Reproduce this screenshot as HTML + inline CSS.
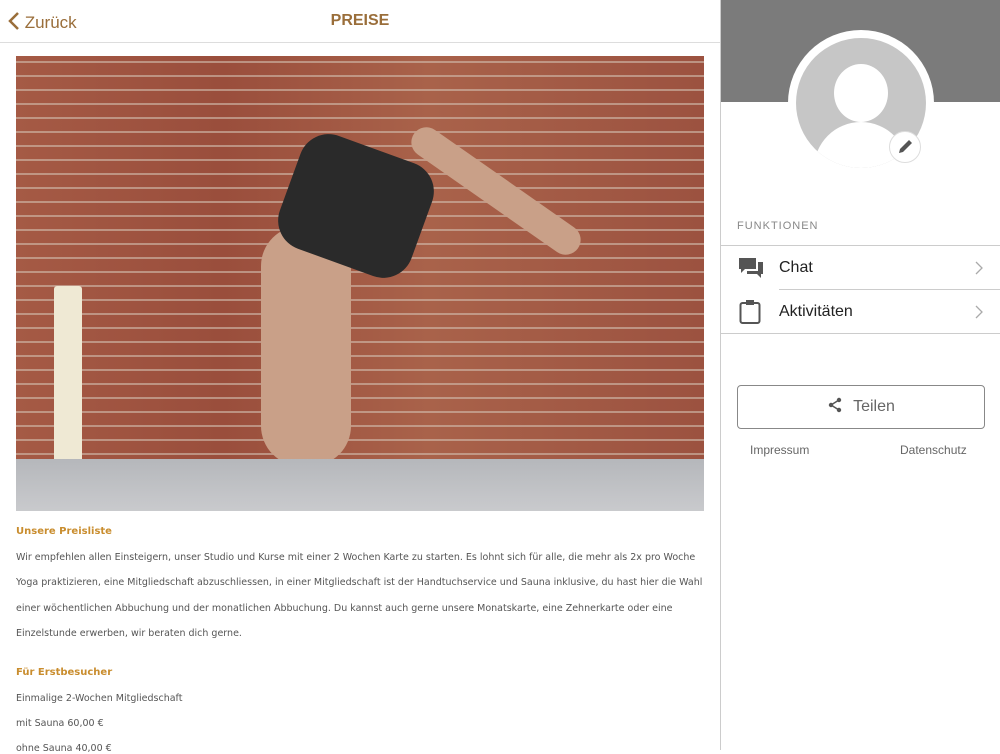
<!DOCTYPE html>
<html><head><meta charset="utf-8"><style>
*{margin:0;padding:0;box-sizing:border-box}
body{width:1000px;height:750px;overflow:hidden;background:#fff;font-family:"Liberation Sans",sans-serif;position:relative}
.hdr{position:absolute;left:0;top:0;width:720px;height:43px;border-bottom:1px solid #ddd}
.back{position:absolute;left:8px;top:12px;color:#9a6e3a;font-size:17px}
.title{position:absolute;left:0;width:720px;top:12px;text-align:center;color:#9a6e3a;font-weight:bold;font-size:16px}
.img{position:absolute;left:16px;top:56px;width:688px;height:455px;overflow:hidden;
background:repeating-linear-gradient(0deg,rgba(210,190,175,.6) 0 2px,transparent 2px 14px),linear-gradient(90deg,#a55a45,#9a4e3c 30%,#a9624a 60%,#9c5240);}
.floor{position:absolute;left:0;bottom:0;width:100%;height:52px;background:linear-gradient(#b5b7bb,#c9cacd)}
.txt{position:absolute;left:16px;font-family:"DejaVu Sans",sans-serif;font-size:9.5px;color:#555;white-space:nowrap}
.h{color:#c98d2e;font-weight:bold;font-size:10px}
.side{position:absolute;left:720px;top:0;width:280px;height:750px;border-left:1px solid #ccc}
.gray{position:absolute;left:0;top:0;width:280px;height:102px;background:#7b7b7b}
.av{position:absolute;left:67px;top:30px;width:146px;height:146px;border-radius:50%;background:#fff}
.av2{position:absolute;left:8px;top:8px;width:130px;height:130px;border-radius:50%;background:#c6c6c6;overflow:hidden}
.pen{position:absolute;left:168px;top:131px;width:32px;height:32px;border-radius:50%;background:#fff;border:1px solid #ddd}
.lbl{position:absolute;left:16px;top:220px;font-size:11px;color:#888;letter-spacing:1px}
.row{position:absolute;left:0;width:280px;height:44px;font-size:16px;color:#222}
</style></head><body>
<div class="hdr"><div class="back"><svg width="12" height="18" viewBox="0 0 12 18" style="vertical-align:-2px"><path d="M10 1L2 9l8 8" stroke="#9a6e3a" stroke-width="2.5" fill="none"/></svg> Zurück</div><div class="title">PREISE</div></div>
<div class="img">
<div style="position:absolute;left:38px;top:230px;width:28px;height:180px;background:#efe9d4;border-radius:3px"></div>
<div style="position:absolute;left:245px;top:170px;width:90px;height:240px;background:#c9a088;border-radius:40px"></div>
<div style="position:absolute;left:270px;top:90px;width:140px;height:120px;background:#2a2a2a;border-radius:30px;transform:rotate(20deg)"></div>
<div style="position:absolute;left:380px;top:120px;width:200px;height:30px;background:#c9a088;border-radius:15px;transform:rotate(35deg)"></div>
<div class="floor"></div></div>
<div class="txt h" style="top:526px">Unsere Preisliste</div>
<div class="txt" style="top:552px">Wir empfehlen allen Einsteigern, unser Studio und Kurse mit einer 2 Wochen Karte zu starten. Es lohnt sich für alle, die mehr als 2x pro Woche</div>
<div class="txt" style="top:577px">Yoga praktizieren, eine Mitgliedschaft abzuschliessen, in einer Mitgliedschaft ist der Handtuchservice und Sauna inklusive, du hast hier die Wahl</div>
<div class="txt" style="top:603px">einer wöchentlichen Abbuchung und der monatlichen Abbuchung. Du kannst auch gerne unsere Monatskarte, eine Zehnerkarte oder eine</div>
<div class="txt" style="top:628px">Einzelstunde erwerben, wir beraten dich gerne.</div>
<div class="txt h" style="top:667px">Für Erstbesucher</div>
<div class="txt" style="top:693px">Einmalige 2-Wochen Mitgliedschaft</div>
<div class="txt" style="top:718px">mit Sauna 60,00 €</div>
<div class="txt" style="top:743px">ohne Sauna 40,00 €</div>
<div class="side">
<div class="gray"></div>
<div class="av"><div class="av2"><div style="position:absolute;left:38px;top:26px;width:54px;height:58px;border-radius:50%;background:#fff"></div><div style="position:absolute;left:18px;top:84px;width:94px;height:80px;border-radius:47px 47px 0 0;background:#fff"></div></div></div>
<div class="pen"><svg width="30" height="30" viewBox="0 0 30 30"><path d="M9 21l1-4 9-9 3 3-9 9z" fill="#555"/></svg></div>
<div class="lbl">FUNKTIONEN</div>
<div style="position:absolute;left:0;top:245px;width:280px;border-top:1px solid #ccc"></div>
<div class="row" style="top:246px"><svg style="position:absolute;left:17px;top:11px" width="26" height="22" viewBox="0 0 26 22"><path d="M1 1h17v11H7l-4 4v-4H1z" fill="#555"/><path d="M20 5h5v12h-2v4l-4-4H9v-3h11z" fill="#555"/></svg><span style="position:absolute;left:58px;top:13px">Chat</span><svg style="position:absolute;left:254px;top:15px" width="8" height="14" viewBox="0 0 8 14"><path d="M1 1l6 6-6 6" stroke="#aaa" stroke-width="1.3" fill="none"/></svg></div>
<div style="position:absolute;left:58px;top:289px;width:222px;border-top:1px solid #ccc"></div>
<div class="row" style="top:290px"><svg style="position:absolute;left:18px;top:9px" width="22" height="26" viewBox="0 0 22 26"><rect x="1.5" y="4" width="19" height="20" rx="2" fill="none" stroke="#555" stroke-width="2"/><rect x="7" y="1" width="8" height="5" fill="#555"/></svg><span style="position:absolute;left:58px;top:13px">Aktivitäten</span><svg style="position:absolute;left:254px;top:15px" width="8" height="14" viewBox="0 0 8 14"><path d="M1 1l6 6-6 6" stroke="#aaa" stroke-width="1.3" fill="none"/></svg></div>
<div style="position:absolute;left:0;top:333px;width:280px;border-top:1px solid #ccc"></div>
<div style="position:absolute;left:16px;top:385px;width:248px;height:44px;border:1px solid #888;border-radius:4px;text-align:center;line-height:42px;font-size:16px;color:#666"><svg width="16" height="16" viewBox="0 0 16 16" style="vertical-align:-2px;margin-right:10px"><circle cx="12" cy="3" r="2.2" fill="#555"/><circle cx="4" cy="8" r="2.2" fill="#555"/><circle cx="12" cy="13" r="2.2" fill="#555"/><path d="M12 3L4 8l8 5" stroke="#555" stroke-width="1.5" fill="none"/></svg>Teilen</div>
<div style="position:absolute;left:29px;top:443px;font-size:12px;color:#666">Impressum</div>
<div style="position:absolute;left:179px;top:443px;font-size:12px;color:#666">Datenschutz</div>
</div>
</body></html>
